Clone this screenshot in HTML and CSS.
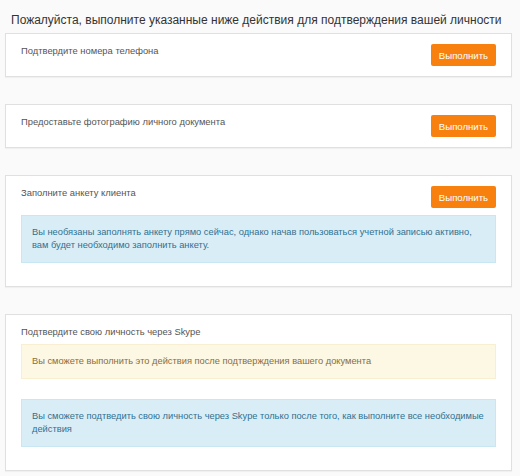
FILE: index.html
```html
<!DOCTYPE html>
<html lang="ru">
<head>
<meta charset="utf-8">
<link rel="stylesheet" href="styles.css">
</head>
<body>
<div class="page">
  <h1 class="heading">Пожалуйста, выполните указанные ниже действия для подтверждения вашей личности</h1>

  <div class="card">
    <div class="card-head">
      <div class="card-title">Подтвердите номера телефона</div>
      <button class="btn">Выполнить</button>
    </div>
  </div>

  <div class="card">
    <div class="card-head">
      <div class="card-title">Предоставьте фотографию личного документа</div>
      <button class="btn">Выполнить</button>
    </div>
  </div>

  <div class="card">
    <div class="card-head">
      <div class="card-title">Заполните анкету клиента</div>
      <button class="btn">Выполнить</button>
    </div>
    <div class="alert alert-info alert-after-btn">Вы необязаны заполнять анкету прямо сейчас, однако начав пользоваться учетной записью активно, вам будет необходимо заполнить анкету.</div>
  </div>

  <div class="card">
    <div class="card-head">
      <div class="card-title">Подтвердите свою личность через Skype</div>
    </div>
    <div class="alert alert-warning alert-after-title">Вы сможете выполнить это действия после подтверждения вашего документа</div>
    <div class="alert alert-info alert-stacked">Вы сможете подтведить свою личность через Skype только после того, как выполните все необходимые действия</div>
  </div>
</div>
</body>
</html>
```

FILE: styles.css
```css
* { box-sizing: border-box; }

html, body {
  margin: 0;
  padding: 0;
  background: #fafafa;
}

body {
  font-family: "Liberation Sans", sans-serif;
  color: #555;
}

.page {
  padding: 12px 8px 0 5px;
}

.heading {
  margin: 0 0 5px 6px;
  font-family: "Liberation Sans", sans-serif;
  font-size: 12px;
  line-height: 16px;
  font-weight: normal;
  color: #333;
  white-space: nowrap;
}

.card {
  background: #fff;
  border: 1px solid #e0e0e0;
  box-shadow: 0 1px 1px rgba(0, 0, 0, 0.04);
  padding: 10px 15px;
  margin-bottom: 27px;
}

.card-head {
  display: flex;
  justify-content: space-between;
  align-items: flex-start;
}

.card-title {
  font-size: 9.4px;
  line-height: 14px;
  color: #555;
}

.btn {
  height: 22px;
  width: 65px;
  border: 0;
  border-radius: 2px;
  background: #f8800f;
  color: #fff;
  font-family: "Liberation Sans", sans-serif;
  font-size: 9.6px;
  padding: 0;
  cursor: pointer;
}

.alert {
  border: 1px solid transparent;
  padding: 10px;
  font-size: 9.3px;
  line-height: 13px;
  margin-bottom: 13px;
}

.alert-info {
  background: #d9edf7;
  border-color: #c9e6f3;
  color: #31708f;
}

.alert-warning {
  background: #fcf8e3;
  border-color: #f8efd3;
  color: #8a6d3b;
}

.alert-after-btn { margin-top: 7px; }
.alert-after-title { margin-top: 5px; margin-bottom: 20px; }
.alert-stacked { margin-top: 0; }
```
